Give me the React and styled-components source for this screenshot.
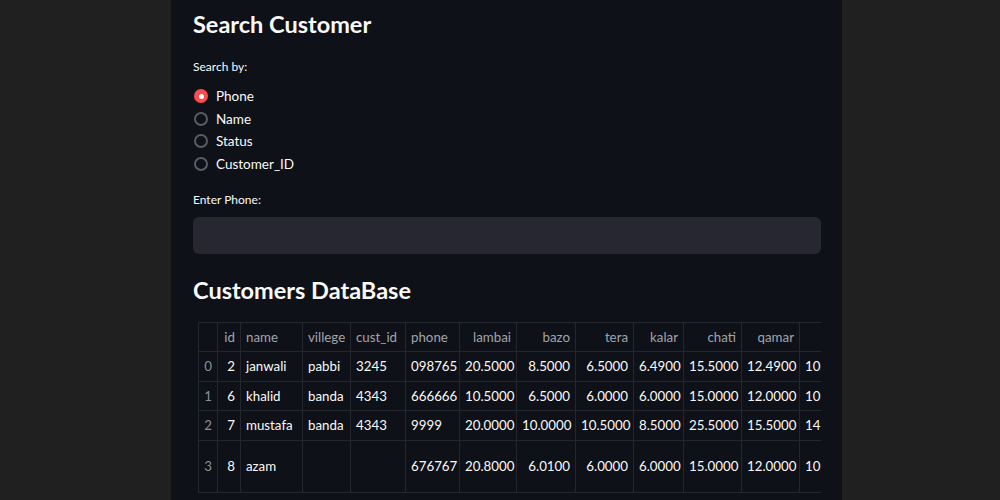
import React, {useState} from 'react'
import styled, {createGlobalStyle} from 'styled-components'

const GlobalStyle = createGlobalStyle`
    body {
        margin: 0;
        background: #202020;
        font-family: Lato, "Noto Sans", sans-serif;
    }
`

const Page = styled.div`
    display: flex;
    height: 500px;
    overflow: hidden;
`

const Main = styled.main`
    background: #0e1117;
    color: #fafafa;
    margin-left: 171px;
    width: 671px;
    padding: 0 21px 0 22px;
    box-sizing: border-box;
`

const Title = styled.h3`
    font-size: 23.5px;
    font-weight: 700;
    margin: ${props => props.$top}px 0 0;
    line-height: 30px;
`

const Label = styled.div`
    font-size: 12px;
    margin-top: ${props => props.$top}px;
    line-height: 16px;
`

const RadioGroup = styled.div`
    display: flex;
    flex-direction: column;
    gap: 4.7px;
    margin-top: 12px;
`

const RadioRow = styled.label`
    display: flex;
    align-items: center;
    gap: 8px;
    font-size: 13.5px;
    line-height: 18px;
    cursor: pointer;
`

const RadioDot = styled.span`
    width: 14px;
    height: 14px;
    border-radius: 50%;
    box-sizing: border-box;
    margin-left: 1px;
    display: flex;
    align-items: center;
    justify-content: center;
    background: ${props => props.$on ? '#ff4b4b' : 'transparent'};
    border: ${props => props.$on ? 'none' : '2px solid #5a5c63'};

    &::after {
        content: '';
        width: 5px;
        height: 5px;
        border-radius: 50%;
        background: #fff;
        display: ${props => props.$on ? 'block' : 'none'};
    }
`

const Input = styled.input`
    display: block;
    width: 100%;
    height: 37px;
    margin-top: 9px;
    border: none;
    border-radius: 6px;
    background: #262730;
    color: #fafafa;
    padding: 0 12px;
    box-sizing: border-box;
    font: inherit;
    outline: none;
`

const TableWrap = styled.div`
    margin: 17px 0 0 5px;
    overflow: hidden;
`

const Table = styled.table`
    border-collapse: collapse;
    table-layout: fixed;
    width: ${props => props.$width}px;
    font-size: 13.3px;
    white-space: nowrap;
`

const HeadCell = styled.th`
    width: ${props => props.$w}px;
    height: 29px;
    padding: 0 5px;
    box-sizing: border-box;
    font-weight: 400;
    color: #a1a4ad;
    text-align: ${props => props.$num ? 'right' : 'left'};
    border: 1px solid #24272e;
    overflow: hidden;
`

const Cell = styled.td`
    height: ${props => props.$tall ? 52 : 29.5}px;
    padding: 0 5px;
    box-sizing: border-box;
    color: ${props => props.$index ? '#8c8f98' : '#fafafa'};
    text-align: ${props => props.$num ? 'right' : 'left'};
    border: 1px solid #24272e;
    overflow: hidden;
`

const columns = [
    {key: 'id', num: true, w: 23},
    {key: 'name', w: 62},
    {key: 'villege', w: 48},
    {key: 'cust_id', w: 55},
    {key: 'phone', w: 54},
    {key: 'lambai', num: true, w: 57},
    {key: 'bazo', num: true, w: 59},
    {key: 'tera', num: true, w: 58},
    {key: 'kalar', num: true, w: 50},
    {key: 'chati', num: true, w: 58},
    {key: 'qamar', num: true, w: 58},
    {key: 'bazu', num: true, w: 58},
]

const indexWidth = 19
const tableWidth = columns.reduce((sum, col) => sum + col.w, indexWidth)

const rows = [
    {id: 2, name: 'janwali', villege: 'pabbi', cust_id: '3245', phone: '098765', lambai: '20.5000', bazo: '8.5000', tera: '6.5000', kalar: '6.4900', chati: '15.5000', qamar: '12.4900', bazu: '10.5000'},
    {id: 6, name: 'khalid', villege: 'banda', cust_id: '4343', phone: '666666', lambai: '10.5000', bazo: '6.5000', tera: '6.0000', kalar: '6.0000', chati: '15.0000', qamar: '12.0000', bazu: '10.0000'},
    {id: 7, name: 'mustafa', villege: 'banda', cust_id: '4343', phone: '9999', lambai: '20.0000', bazo: '10.0000', tera: '10.5000', kalar: '8.5000', chati: '25.5000', qamar: '15.5000', bazu: '14.0000'},
    {id: 8, name: 'azam', villege: '', cust_id: '', phone: '676767', lambai: '20.8000', bazo: '6.0100', tera: '6.0000', kalar: '6.0000', chati: '15.0000', qamar: '12.0000', bazu: '10.0000', tall: true},
]

const options = ['Phone', 'Name', 'Status', 'Customer_ID']

const App = () => {
    const [searchBy, setSearchBy] = useState('Phone')

    return (
        <Page>
            <GlobalStyle />
            <Main>
                <Title $top={9}>Search Customer</Title>
                <Label $top={20}>Search by:</Label>
                <RadioGroup>
                    {options.map(opt => (
                        <RadioRow key={opt} onClick={() => setSearchBy(opt)}>
                            <RadioDot $on={searchBy === opt} />
                            {opt}
                        </RadioRow>
                    ))}
                </RadioGroup>
                <Label $top={19}>Enter {searchBy}:</Label>
                <Input />
                <Title $top={21}>Customers DataBase</Title>
                <TableWrap>
                    <Table $width={tableWidth}>
                        <thead>
                            <tr>
                                <HeadCell $w={indexWidth} />
                                {columns.map(col => <HeadCell key={col.key} $w={col.w} $num={col.num}>{col.key}</HeadCell>)}
                            </tr>
                        </thead>
                        <tbody>
                            {rows.map((row, i) => (
                                <tr key={row.id}>
                                    <Cell $index $num>{i}</Cell>
                                    {columns.map(col => (
                                        <Cell key={col.key} $num={col.num} $tall={row.tall}>{row[col.key]}</Cell>
                                    ))}
                                </tr>
                            ))}
                        </tbody>
                    </Table>
                </TableWrap>
            </Main>
        </Page>
    )
}

export default App
